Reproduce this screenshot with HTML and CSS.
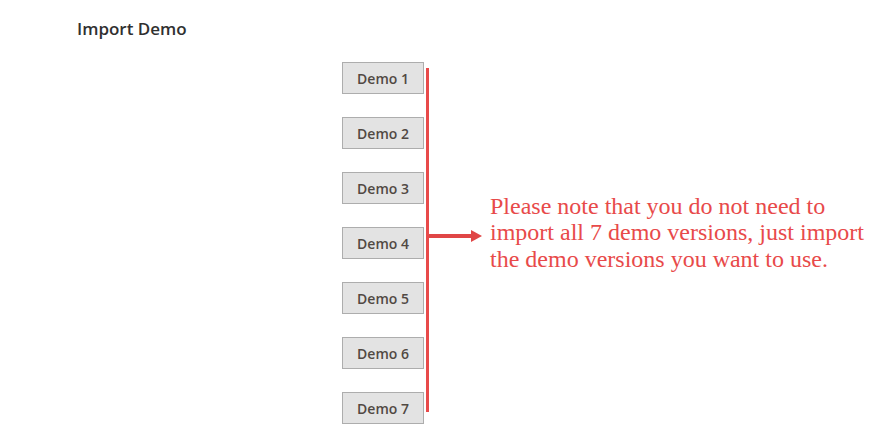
FILE: index.html
```html
<!DOCTYPE html>
<html lang="en">
<head>
    <meta charset="UTF-8">
    <meta name="viewport" content="width=device-width, initial-scale=1.0">
    <title>Import Demo</title>
    <link rel="stylesheet" href="styles.css">
</head>
<body>
    <div class="header">
        <h2>Import Demo</h2>
    </div>
    <div class="import-area">
        <div class="demo-list">
            <button>Demo 1</button>
            <button>Demo 2</button>
            <button>Demo 3</button>
            <button>Demo 4</button>
            <button>Demo 5</button>
            <button>Demo 6</button>
            <button>Demo 7</button>
        </div>
        <div class="bracket"></div>
        <div class="note">
            <svg class="arrow" width="54" height="14" viewBox="0 0 54 14">
                <rect x="0" y="5" width="44" height="4" fill="#e04646"/>
                <polygon points="42,1 53,7 42,13" fill="#e04646"/>
            </svg>
            <p>Please note that you do not need to<br>import all 7 demo versions, just import<br>the demo versions you want to use.</p>
        </div>
    </div>
</body>
</html>
```

FILE: styles.css
```css
body {
    font-family: "Open Sans", Arial, sans-serif;
    background-color: white;
    margin: 0;
}
.header {
    padding: 18px 0 0 77px;
}
.header h2 {
    margin: 0;
    font-size: 17px;
    font-weight: 600;
    color: #303030;
    line-height: 22px;
}
.import-area {
    display: flex;
    align-items: center;
    margin-top: 22px;
    padding-left: 342px;
}
.demo-list {
    display: flex;
    flex-direction: column;
    gap: 23px;
}
.demo-list button {
    width: 82px;
    height: 32px;
    background-color: #e3e3e3;
    border: 1px solid #adadad;
    color: #514943;
    font-family: "Open Sans", Arial, sans-serif;
    font-size: 14px;
    font-weight: 600;
    padding: 0;
}
.bracket {
    align-self: stretch;
    width: 3px;
    margin: 6px 0 12px 2px;
    background-color: #e84a4a;
}
.note {
    display: flex;
    align-items: center;
    gap: 7px;
    margin-bottom: 21px;
}
.arrow {
    display: block;
    margin-top: 6px;
}
.note p {
    margin: 0;
    font-family: "Liberation Serif", "Times New Roman", serif;
    font-size: 24px;
    line-height: 26.5px;
    color: #e84a4a;
}
```
